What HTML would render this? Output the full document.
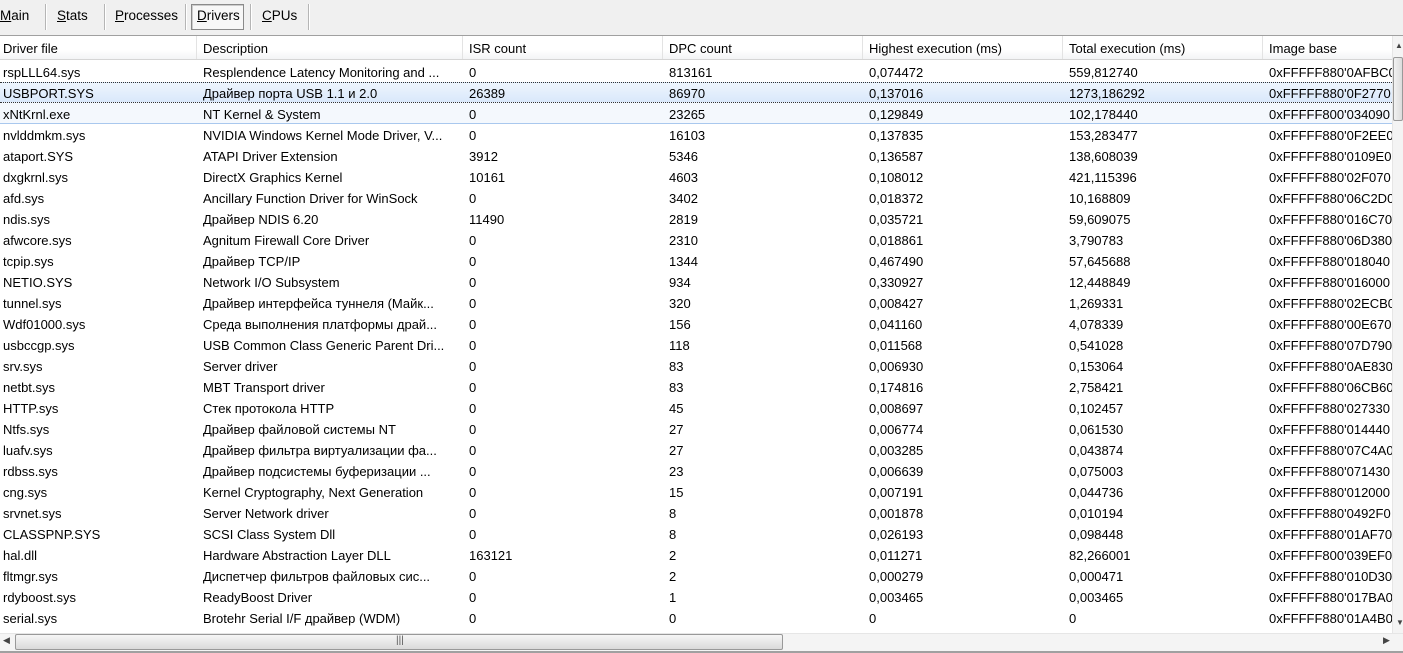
<!DOCTYPE html>
<html><head><meta charset="utf-8"><style>
*{margin:0;padding:0;box-sizing:border-box}
body{width:1403px;height:652px;overflow:hidden;background:#f0f0f0;font-family:"Liberation Sans","DejaVu Sans",sans-serif;font-size:13px;color:#000;position:relative}
.tab{position:absolute;top:8px;font-size:13.5px}
.sep{position:absolute;top:4px;width:1px;height:26px;background:#b5b5b5;box-shadow:1px 0 0 #fff}
#content{position:absolute;left:0;top:35px;width:1403px;height:617px;background:#fff;border-top:1px solid #a0a0a0}
.hdr{position:absolute;left:0;top:0;width:1392px;height:24px;background:linear-gradient(#fff,#fff 60%,#f3f4f6);border-bottom:1px solid #d5d5d5}
.hs{position:absolute;top:0;width:1px;height:23px;background:#e3e3e3}
.c{position:absolute;white-space:nowrap;line-height:21px;overflow:hidden}
.row{position:absolute;left:0;width:1392px;height:21px}
</style></head><body>
<div class="tab" style="left:0"><u>M</u>ain</div>
<div class="sep" style="left:45px"></div>
<div class="tab" style="left:57px"><u>S</u>tats</div>
<div class="sep" style="left:104px"></div>
<div class="tab" style="left:115px"><u>P</u>rocesses</div>
<div class="sep" style="left:185px"></div>
<div style="position:absolute;left:191px;top:4px;width:53px;height:26px;border:1px solid #8a8a8a;background:#f7f7f7;box-shadow:inset 1px 1px 0 #ccc"></div>
<div class="tab" style="left:197px"><u>D</u>rivers</div>
<div class="sep" style="left:250px"></div>
<div class="tab" style="left:262px"><u>C</u>PUs</div>
<div class="sep" style="left:308px"></div>
<div id="content">
<div class="hdr">
<div class="c" style="left:3px;top:2px">Driver file</div>
<div class="hs" style="left:196px"></div><div class="c" style="left:203px;top:2px">Description</div>
<div class="hs" style="left:462px"></div><div class="c" style="left:469px;top:2px">ISR count</div>
<div class="hs" style="left:662px"></div><div class="c" style="left:669px;top:2px">DPC count</div>
<div class="hs" style="left:862px"></div><div class="c" style="left:869px;top:2px">Highest execution (ms)</div>
<div class="hs" style="left:1062px"></div><div class="c" style="left:1069px;top:2px">Total execution (ms)</div>
<div class="hs" style="left:1262px"></div><div class="c" style="left:1269px;top:2px">Image base</div>
</div>
<div class="row" style="top:46px;background:linear-gradient(#eef5fd,#d9e8fb);border-top:1px dotted #333;border-bottom:1px dotted #333"></div>
<div class="row" style="top:67px;background:#f4f8fd;border-bottom:1px solid #a9c8ee"></div>
<div id="rows"></div>
<div style="position:absolute;left:1392px;top:0;width:11px;height:597px;background:#f4f4f4;border-left:1px solid #e6e6e6"></div>
<div style="position:absolute;left:1395px;top:5px;font-size:8px;color:#444">▲</div>
<div style="position:absolute;left:1393px;top:21px;width:10px;height:64px;background:linear-gradient(90deg,#f2f2f2,#dcdcdc);border:1px solid #999;border-radius:2px"></div>
<div style="position:absolute;left:1396px;top:582px;font-size:8px;color:#444">▼</div>
<div style="position:absolute;left:0;top:597px;width:1403px;height:18px;background:#f4f4f4;border-top:1px solid #e6e6e6"></div>
<div style="position:absolute;left:3px;top:599px;font-size:9px;color:#444">◀</div>
<div style="position:absolute;left:15px;top:598px;width:768px;height:16px;background:linear-gradient(#f6f6f6,#dadada);border:1px solid #999;border-radius:2px"></div>
<div style="position:absolute;left:396px;top:599px;font-size:10px;color:#555">|||</div>
<div style="position:absolute;left:1383px;top:599px;font-size:9px;color:#444">▶</div>
<div style="position:absolute;left:0;top:615px;width:1403px;height:2px;background:#a0a0a0"></div>
</div>
<script>
var d=[
["rspLLL64.sys","Resplendence Latency Monitoring and ...","0","813161","0,074472","559,812740","0xFFFFF880'0AFBC0"],
["USBPORT.SYS","Драйвер порта USB 1.1 и 2.0","26389","86970","0,137016","1273,186292","0xFFFFF880'0F2770"],
["xNtKrnl.exe","NT Kernel & System","0","23265","0,129849","102,178440","0xFFFFF800'034090"],
["nvlddmkm.sys","NVIDIA Windows Kernel Mode Driver, V...","0","16103","0,137835","153,283477","0xFFFFF880'0F2EE0"],
["ataport.SYS","ATAPI Driver Extension","3912","5346","0,136587","138,608039","0xFFFFF880'0109E0"],
["dxgkrnl.sys","DirectX Graphics Kernel","10161","4603","0,108012","421,115396","0xFFFFF880'02F070"],
["afd.sys","Ancillary Function Driver for WinSock","0","3402","0,018372","10,168809","0xFFFFF880'06C2D0"],
["ndis.sys","Драйвер NDIS 6.20","11490","2819","0,035721","59,609075","0xFFFFF880'016C70"],
["afwcore.sys","Agnitum Firewall Core Driver","0","2310","0,018861","3,790783","0xFFFFF880'06D380"],
["tcpip.sys","Драйвер TCP/IP","0","1344","0,467490","57,645688","0xFFFFF880'018040"],
["NETIO.SYS","Network I/O Subsystem","0","934","0,330927","12,448849","0xFFFFF880'016000"],
["tunnel.sys","Драйвер интерфейса туннеля (Майк...","0","320","0,008427","1,269331","0xFFFFF880'02ECB0"],
["Wdf01000.sys","Среда выполнения платформы драй...","0","156","0,041160","4,078339","0xFFFFF880'00E670"],
["usbccgp.sys","USB Common Class Generic Parent Dri...","0","118","0,011568","0,541028","0xFFFFF880'07D790"],
["srv.sys","Server driver","0","83","0,006930","0,153064","0xFFFFF880'0AE830"],
["netbt.sys","MBT Transport driver","0","83","0,174816","2,758421","0xFFFFF880'06CB60"],
["HTTP.sys","Стек протокола HTTP","0","45","0,008697","0,102457","0xFFFFF880'027330"],
["Ntfs.sys","Драйвер файловой системы NT","0","27","0,006774","0,061530","0xFFFFF880'014440"],
["luafv.sys","Драйвер фильтра виртуализации фа...","0","27","0,003285","0,043874","0xFFFFF880'07C4A0"],
["rdbss.sys","Драйвер подсистемы буферизации ...","0","23","0,006639","0,075003","0xFFFFF880'071430"],
["cng.sys","Kernel Cryptography, Next Generation","0","15","0,007191","0,044736","0xFFFFF880'012000"],
["srvnet.sys","Server Network driver","0","8","0,001878","0,010194","0xFFFFF880'0492F0"],
["CLASSPNP.SYS","SCSI Class System Dll","0","8","0,026193","0,098448","0xFFFFF880'01AF70"],
["hal.dll","Hardware Abstraction Layer DLL","163121","2","0,011271","82,266001","0xFFFFF800'039EF0"],
["fltmgr.sys","Диспетчер фильтров файловых сис...","0","2","0,000279","0,000471","0xFFFFF880'010D30"],
["rdyboost.sys","ReadyBoost Driver","0","1","0,003465","0,003465","0xFFFFF880'017BA0"],
["serial.sys","Brotehr Serial I/F драйвер (WDM)","0","0","0","0","0xFFFFF880'01A4B0"]];
var x=[3,203,469,669,869,1069,1269],w=[190,256,190,190,190,190,123],h="";
d.forEach(function(r,i){r.forEach(function(t,j){h+='<div class="c" style="left:'+x[j]+'px;top:'+(26+21*i)+'px;width:'+w[j]+'px">'+t.replace(/&/g,"&amp;")+'</div>'})});
document.getElementById("rows").innerHTML=h;
</script>
</body></html>
